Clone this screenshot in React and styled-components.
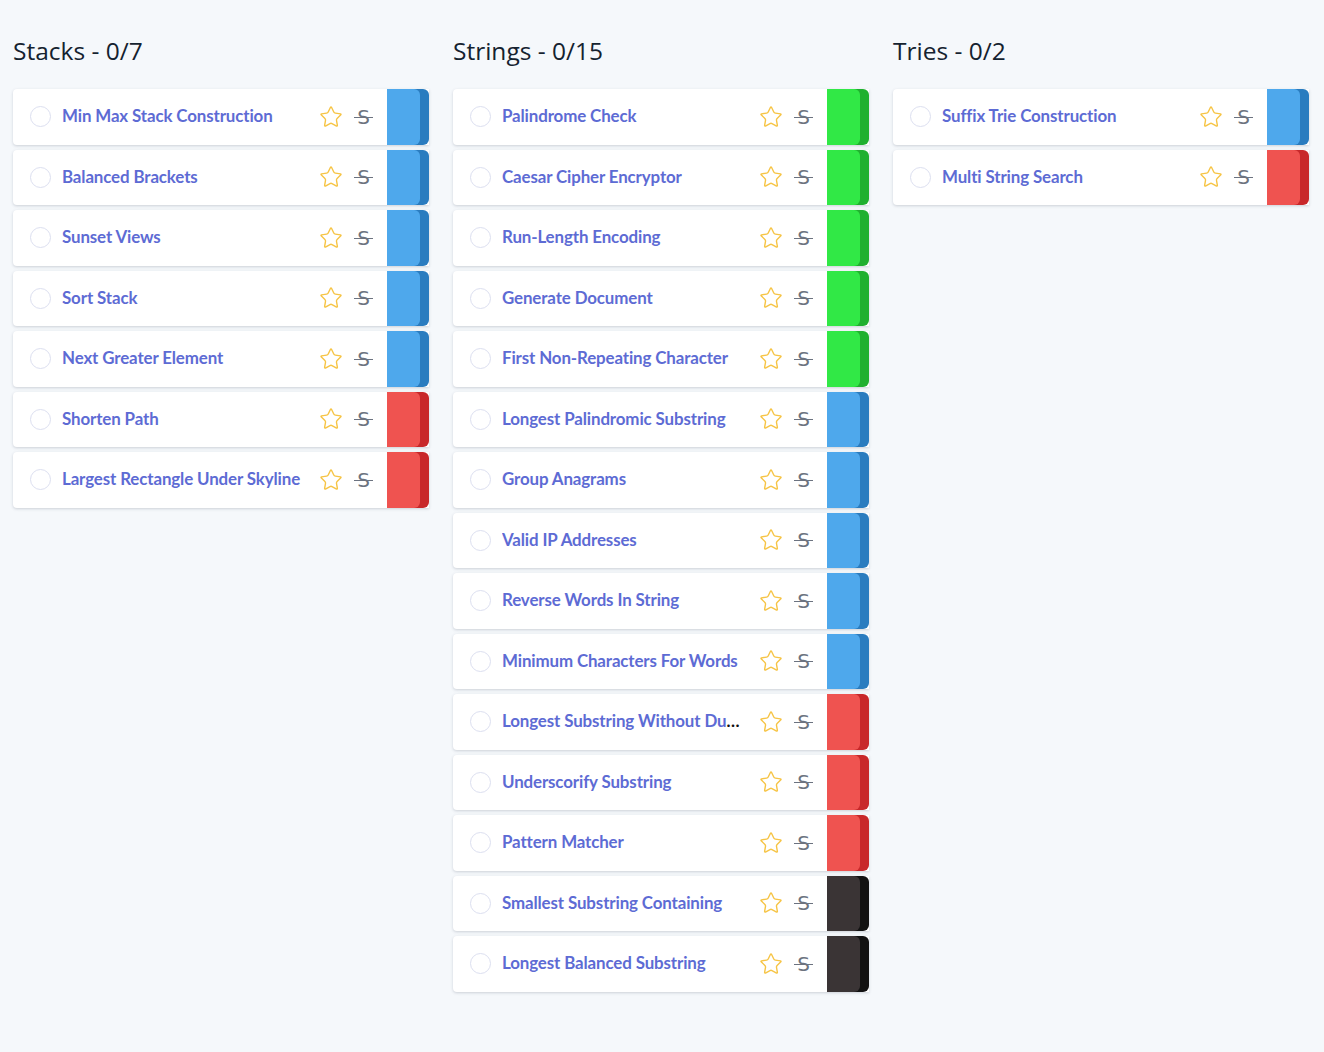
import React from "react";
import styled, { createGlobalStyle } from "styled-components";
import { Star } from "lucide-react";

const GlobalStyle = createGlobalStyle`
    body {
        margin: 0;
        background: #f5f8fb;
        font-family: "Lato", "Noto Sans", sans-serif;
    }
`

const colors = {
    blue: { light: "#4ea8ec", dark: "#2a7cbf" },
    green: { light: "#31e846", dark: "#20b02f" },
    red: { light: "#ef5350", dark: "#c8282a" },
    black: { light: "#3a3435", dark: "#121212" },
}

const categories = [
    {
        title: "Stacks - 0/7",
        items: [
            ["Min Max Stack Construction", "blue"],
            ["Balanced Brackets", "blue"],
            ["Sunset Views", "blue"],
            ["Sort Stack", "blue"],
            ["Next Greater Element", "blue"],
            ["Shorten Path", "red"],
            ["Largest Rectangle Under Skyline", "red"],
        ],
    },
    {
        title: "Strings - 0/15",
        items: [
            ["Palindrome Check", "green"],
            ["Caesar Cipher Encryptor", "green"],
            ["Run-Length Encoding", "green"],
            ["Generate Document", "green"],
            ["First Non-Repeating Character", "green"],
            ["Longest Palindromic Substring", "blue"],
            ["Group Anagrams", "blue"],
            ["Valid IP Addresses", "blue"],
            ["Reverse Words In String", "blue"],
            ["Minimum Characters For Words", "blue"],
            ["Longest Substring Without Duplication", "red"],
            ["Underscorify Substring", "red"],
            ["Pattern Matcher", "red"],
            ["Smallest Substring Containing", "black"],
            ["Longest Balanced Substring", "black"],
        ],
    },
    {
        title: "Tries - 0/2",
        items: [
            ["Suffix Trie Construction", "blue"],
            ["Multi String Search", "red"],
        ],
    },
]

const Page = styled.div`
    display: grid;
    grid-template-columns: repeat(3, 416px);
    column-gap: 24px;
    align-items: start;
    padding: 33px 13px 40px;
`

const Column = styled.div`
    display: flex;
    flex-direction: column;
`

const Title = styled.h2`
    margin: 0 0 20px;
    font-family: "Open Sans", "Noto Sans", sans-serif;
    font-weight: 400;
    font-size: 24.5px;
    line-height: 36px;
    color: #14222f;
`

const Card = styled.div`
    display: flex;
    align-items: center;
    height: 55.5px;
    margin-bottom: 5px;
    background: #fff;
    border-radius: 4px 0 0 4px;
    box-shadow: 0 1px 3px rgba(60, 70, 90, 0.22);
    padding-left: 17px;
`

const Circle = styled.span`
    flex: none;
    width: 19px;
    height: 19px;
    border-radius: 50%;
    border: 1px solid #dcdff0;
`

const Name = styled.div`
    flex: 0 1 auto;
    width: 241px;
    margin-left: 11px;
    margin-top: -2px;
    white-space: nowrap;
    overflow: hidden;
    text-overflow: ellipsis;
    color: #111;
    font-weight: 700;
    font-size: 16.9px;
    letter-spacing: -0.12px;
`

const NameLink = styled.span`
    color: #5d6bd4;
`

const Icons = styled.div`
    display: flex;
    align-items: center;
    margin-left: auto;
    gap: 11px;
    padding-right: 14px;
`

const Strike = styled.span`
    position: relative;
    display: inline-block;
    width: 19px;
    text-align: center;
    font-family: "DejaVu Sans", sans-serif;
    font-size: 20px;
    line-height: 22px;
    color: #6c7380;

    &::after {
        content: "";
        position: absolute;
        left: 0;
        right: 0;
        top: 11px;
        height: 1.2px;
        background: #6c7380;
    }
`

const Tab = styled.div`
    flex: none;
    align-self: stretch;
    width: 42px;
    border-radius: 0 6px 6px 0;
    background: ${p => colors[p.$level].dark};
    display: flex;
`

const TabFace = styled.div`
    width: 33px;
    border-radius: 0 6px 6px 0;
    background: ${p => colors[p.$level].light};
`

const Problem = ({ name, level }) => (
    <Card>
        <Circle />
        <Name>
            <NameLink>{name}</NameLink>
        </Name>
        <Icons>
            <Star size={24} strokeWidth={1.4} color="#f6c445" />
            <Strike>S</Strike>
        </Icons>
        <Tab $level={level}>
            <TabFace $level={level} />
        </Tab>
    </Card>
)

export default function App() {
    return (
        <>
            <GlobalStyle />
            <Page>
                {categories.map(cat => (
                    <Column key={cat.title}>
                        <Title>{cat.title}</Title>
                        {cat.items.map(([name, level]) => (
                            <Problem key={name} name={name} level={level} />
                        ))}
                    </Column>
                ))}
            </Page>
        </>
    )
}
